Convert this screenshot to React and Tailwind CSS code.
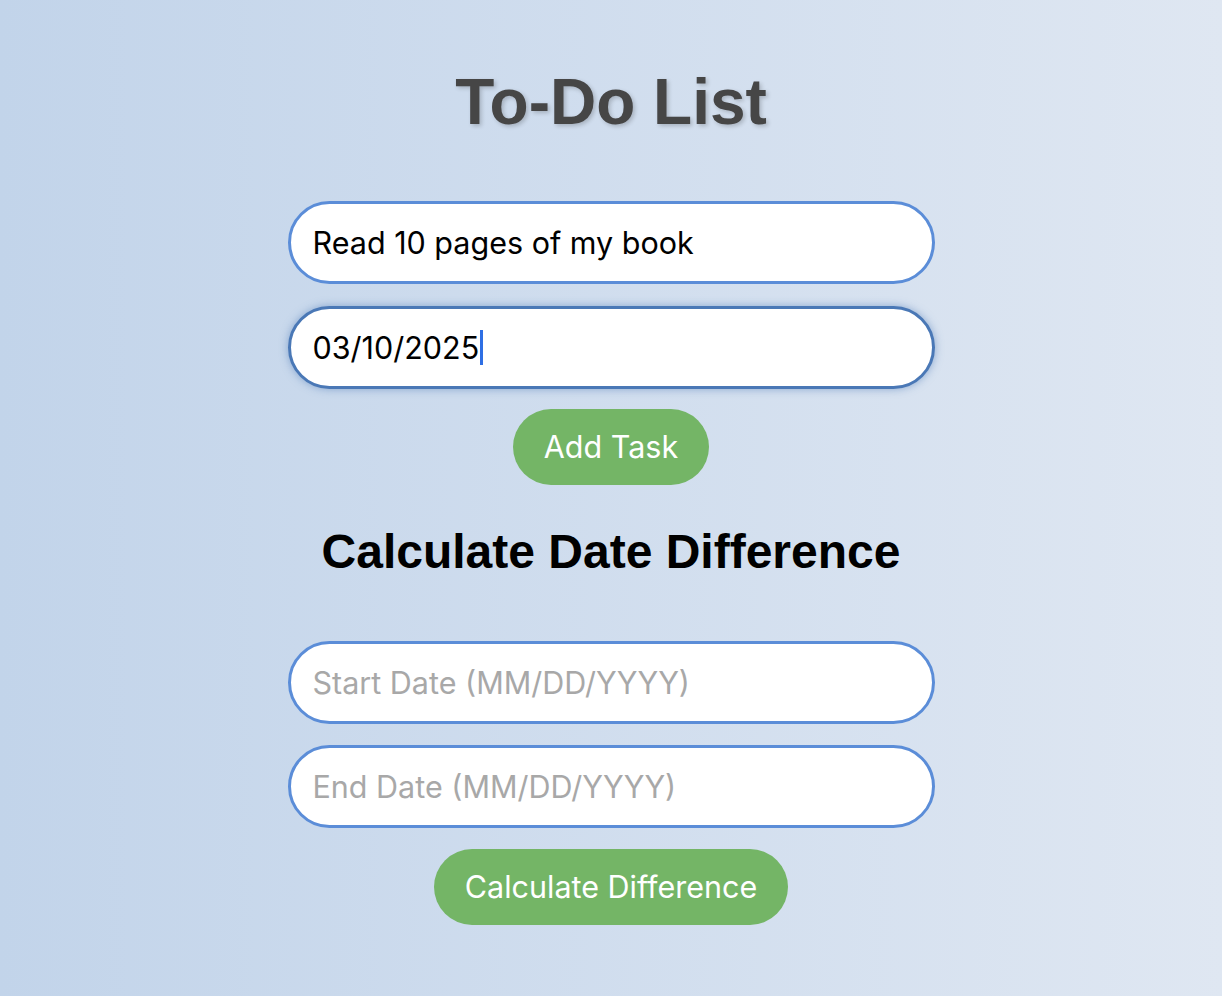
import { useState } from 'react'

const inputBase =
  "h-[83px] w-[647px] rounded-full border-[3px] border-[#5b8dd8] bg-white px-[22px] text-[30.5px] text-black outline-none placeholder:text-[#a8a8a8] [font-family:Inter,'Noto_Sans',sans-serif]"

function GreenButton({ children }) {
  return (
    <button
      type="button"
      className="h-[76px] rounded-full bg-[#74b566] px-[31px] text-[30.5px] text-white [font-family:Inter,'Noto_Sans',sans-serif]"
    >
      {children}
    </button>
  )
}

export default function App() {
  const [task, setTask] = useState('Read 10 pages of my book')
  const [start, setStart] = useState('')
  const [end, setEnd] = useState('')

  return (
    <div className="min-h-[996px] w-full bg-gradient-to-r from-[#c2d4ea] to-[#dfe7f2]">
      <div className="flex flex-col items-center pt-[62px]">
        <h1 className="text-[64px] font-bold leading-[80px] text-[#464646] [font-family:'Liberation_Sans',Arial,sans-serif] [text-shadow:2px_2px_4px_rgba(0,0,0,0.2)]">
          To-Do List
        </h1>

        {/* task inputs */}
        <div className="mt-[59px] flex flex-col items-center gap-[22px]">
          <input
            className={inputBase}
            value={task}
            onChange={(e) => setTask(e.target.value)}
          />
          {/* focused date field, drawn with its caret */}
          <div className="flex h-[83px] w-[647px] items-center rounded-full border-[3px] border-[#4a78b6] bg-white px-[22px] text-[30.5px] text-black shadow-[0_0_8px_rgba(74,120,182,0.55)] [font-family:Inter,'Noto_Sans',sans-serif]">
            <span>03/10/2025</span>
            <span className="ml-px inline-block h-[35px] w-[3px] bg-[#2f6fe4]" />
          </div>
        </div>

        <div className="mt-[20px]">
          <GreenButton>Add Task</GreenButton>
        </div>

        <h2 className="mt-[39px] text-[48px] font-bold leading-[56px] text-black [font-family:'Liberation_Sans',Arial,sans-serif]">
          Calculate Date Difference
        </h2>

        {/* date difference */}
        <div className="mt-[61px] flex flex-col items-center gap-[21px]">
          <input
            className={inputBase}
            placeholder="Start Date (MM/DD/YYYY)"
            value={start}
            onChange={(e) => setStart(e.target.value)}
          />
          <input
            className={inputBase}
            placeholder="End Date (MM/DD/YYYY)"
            value={end}
            onChange={(e) => setEnd(e.target.value)}
          />
        </div>

        <div className="mt-[21px]">
          <GreenButton>Calculate Difference</GreenButton>
        </div>
      </div>
    </div>
  )
}
